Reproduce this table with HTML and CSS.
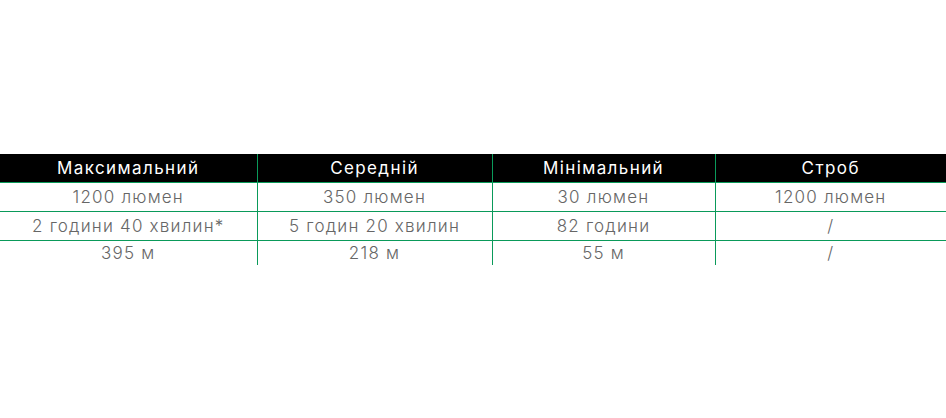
FILE: index.html
```html
<!DOCTYPE html>
<html lang="uk">
<head>
<meta charset="utf-8">
<link rel="stylesheet" href="styles.css">
</head>
<body>
<table class="spec">
  <colgroup>
    <col class="c1"><col class="c2"><col class="c3"><col class="c4">
  </colgroup>
  <thead>
    <tr><th>Максимальний</th><th>Середній</th><th>Мінімальний</th><th>Строб</th></tr>
  </thead>
  <tbody>
    <tr><td>1200 люмен</td><td>350 люмен</td><td>30 люмен</td><td>1200 люмен</td></tr>
    <tr><td>2 години 40 хвилин*</td><td>5 годин 20 хвилин</td><td>82 години</td><td>/</td></tr>
    <tr class="last"><td>395 м</td><td>218 м</td><td>55 м</td><td>/</td></tr>
  </tbody>
</table>
</body>
</html>
```

FILE: styles.css
```css
html, body {
  margin: 0;
  padding: 0;
  background: #fff;
}
body {
  font-family: Inter, "Open Sans", "Liberation Sans", sans-serif;
}
.spec {
  margin-top: 154px;
  width: 946px;
  border-collapse: collapse;
  table-layout: fixed;
}
.c1 { width: 257px; }
.c2 { width: 235px; }
.c3 { width: 223px; }
.c4 { width: 231px; }
.spec th,
.spec td {
  padding: 0;
  height: 28px;
  text-align: center;
  font-size: 17px;
  line-height: 28px;
  border-left: 1px solid #0a9a5a;
  border-bottom: 1px solid #0a9a5a;
  white-space: nowrap;
}
.spec th:first-child,
.spec td:first-child {
  border-left: none;
}
.spec th {
  background: #000;
  color: #fff;
  font-weight: 400;
  letter-spacing: 1.4px;
}
.spec td {
  color: #666;
  font-weight: 300;
  letter-spacing: 1.2px;
}
.spec .last td {
  border-bottom: none;
  height: 22px;
  line-height: 20px;
  padding-top: 2px;
  vertical-align: top;
}
```
